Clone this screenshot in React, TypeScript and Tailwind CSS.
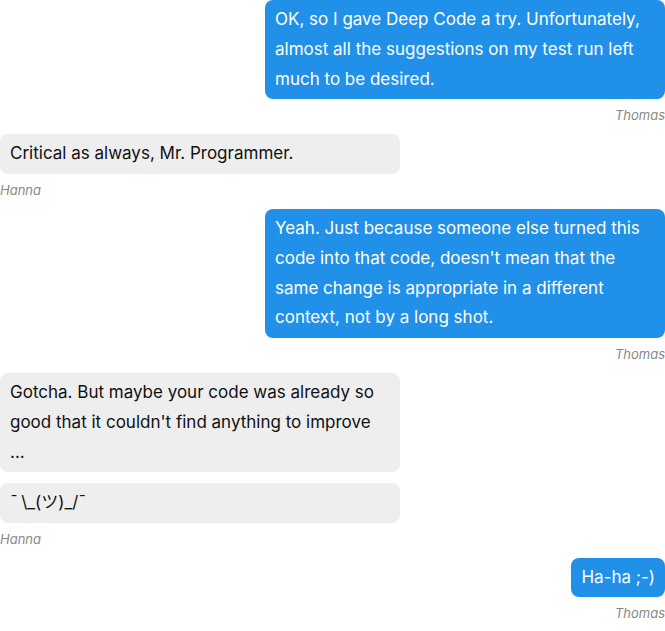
import React from "react";

type Msg = { side: "left" | "right"; name: string; texts: string[] };

const msgs: Msg[] = [
  {
    side: "right",
    name: "Thomas",
    texts: [
      "OK, so I gave Deep Code a try. Unfortunately, almost all the suggestions on my test run left much to be desired.",
    ],
  },
  { side: "left", name: "Hanna", texts: ["Critical as always, Mr. Programmer."] },
  {
    side: "right",
    name: "Thomas",
    texts: [
      "Yeah. Just because someone else turned this code into that code, doesn't mean that the same change is appropriate in a different context, not by a long shot.",
    ],
  },
  {
    side: "left",
    name: "Hanna",
    texts: [
      "Gotcha. But maybe your code was already so good that it couldn't find anything to improve ...",
      "¯\u2009\\_(ツ)_/¯",
    ],
  },
  { side: "right", name: "Thomas", texts: ["Ha-ha ;-)"] },
];

export default function App() {
  return (
    <div
      className="w-[665px] bg-white"
      style={{ fontFamily: "Inter, 'Noto Sans CJK JP', sans-serif" }}
    >
      {msgs.map((m, i) => (
        <div
          key={i}
          className={`flex flex-col mb-[11px] ${m.side === "right" ? "items-end" : "items-start"}`}
        >
          <div
            className={`flex flex-col gap-[10.5px] ${m.side === "right" ? "items-end" : "items-start"}`}
          >
            {m.texts.map((t, j) => (
              <div
                key={j}
                className={
                  m.side === "right"
                    ? "max-w-[400px] rounded-[8px] bg-[#2190e8] px-[10px] py-[5px] text-[17px] leading-[29.75px] text-white"
                    : "w-[400px] rounded-[8px] bg-[#eeeeee] px-[10px] py-[5px] text-[17px] leading-[29.75px] text-[#111111]"
                }
              >
                {t}
              </div>
            ))}
          </div>
          <div className="mt-[8px] text-[13px] leading-[16px] italic text-[#888888]">{m.name}</div>
        </div>
      ))}
    </div>
  );
}
